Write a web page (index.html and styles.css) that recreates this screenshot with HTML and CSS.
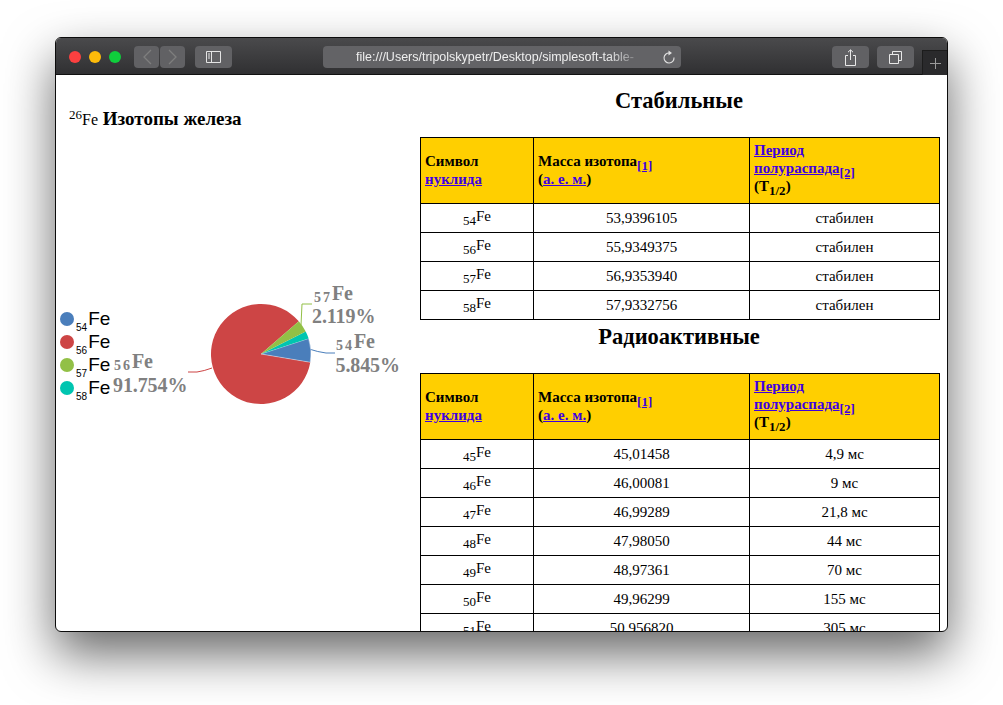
FILE: index.html
```html
<!DOCTYPE html>
<html lang="en">
<head>
    <meta charset="UTF-8">
    <meta name="viewport" content="width=device-width, initial-scale=1.0">
    <title>Изотопы железа</title>
    <link rel="stylesheet" href="styles.css">
</head>
<body>
    <div class="window">
        <div class="titlebar">
            <div class="lights">
                <span class="light red"></span>
                <span class="light yellow"></span>
                <span class="light green"></span>
            </div>
            <div class="nav">
                <div class="btn nav-btn">
                    <svg width="12" height="18" viewBox="0 0 12 18"><path d="M10 2 3 9l7 7" fill="none" stroke="#7e7e7e" stroke-width="1.3"/></svg>
                </div>
                <div class="btn nav-btn">
                    <svg width="12" height="18" viewBox="0 0 12 18"><path d="M2 2l7 7-7 7" fill="none" stroke="#7e7e7e" stroke-width="1.3"/></svg>
                </div>
            </div>
            <div class="btn sidebar-btn">
                <svg width="15" height="12" viewBox="0 0 15 12"><path d="M.5.5h14v11H.5zM5.500.5v11" fill="none" stroke="#e4e4e4"/><path d="M2 3h2M2 5h2M2 7h2" stroke="#e4e4e4"/></svg>
            </div>
            <div class="url">
                <span class="url-text">file:///Users/tripolskypetr/Desktop/simplesoft-table-</span>
                <svg class="reload" width="14" height="15" viewBox="0 0 14 15"><path d="M7.500 3A5 5 0 1 0 12 7.500" fill="none" stroke="#e0e0e0" stroke-width="1.1"/><path d="M6.500.5 10 3 6.500 5.500z" fill="#e0e0e0"/></svg>
            </div>
            <div class="btn tool-btn">
                <svg width="13" height="17" viewBox="0 0 13 17"><path d="M4 6.500H1.500v10h10v-10H9M6.500 11V1M4 3.200 6.500.8 9 3.200" fill="none" stroke="#e8e8e8"/></svg>
            </div>
            <div class="btn tool-btn">
                <svg width="13" height="13" viewBox="0 0 13 13"><path d="M.5 3.500h9v9h-9zM3.500 3.500v-3h9v9h-3" fill="none" stroke="#e8e8e8"/></svg>
            </div>
            <div class="new-tab">
                <svg width="11" height="11" viewBox="0 0 11 11"><path d="M5.500 0v11M0 5.500h11" stroke="#9a9a9a"/></svg>
            </div>
        </div>

        <div class="page">
            <div class="left">
                <h3 class="chart-title"><span class="title-nuclide"><sup>26</sup>Fe</span> Изотопы железа</h3>
                <div class="chart">
                    <ul class="legend">
                        <li><span class="dot c54"></span><sub>54</sub>Fe</li>
                        <li><span class="dot c56"></span><sub>56</sub>Fe</li>
                        <li><span class="dot c57"></span><sub>57</sub>Fe</li>
                        <li><span class="dot c58"></span><sub>58</sub>Fe</li>
                    </ul>
                    <!-- centre of pie at 205,105 -->
                    <svg class="pie" width="364" height="210" viewBox="0 0 364 210">
                        <path d="M253 100q9 3 17 4h9" fill="none" stroke="#4a7ebb"/>
                        <path d="M245 76l1-21h10" fill="none" stroke="#92c046"/>
                        <path d="M156 119q-8 3-15 4h-9" fill="none" stroke="#cd4545"/>
                        <g transform="translate(205 105)">
                            <path d="M0 0 49.300 8.300A50 50 0 1 1 37.800-32.700Z" fill="#cd4545"/>
                            <path d="M0 0 47.600-15.500A50 50 0 0 1 49.300 8.300Z" fill="#4a7ebb" stroke="#fff" stroke-width=".4"/>
                            <path d="M0 0 44.700-22.400A50 50 0 0 1 47.600-15.500Z" fill="#00c5b0"/>
                            <path d="M0 0 37.800-32.700A50 50 0 0 1 44.700-22.400Z" fill="#92c046"/>
                        </g>
                        <text class="label" x="280" y="99"><tspan class="label-sub" dy="2">54</tspan><tspan dy="-2">Fe</tspan></text>
                        <text class="label" x="279.500" y="123">5.845%</text>
                        <text class="label" x="258" y="51"><tspan class="label-sub" dy="2">57</tspan><tspan dy="-2">Fe</tspan></text>
                        <text class="label" x="256" y="74">2.119%</text>
                        <text class="label" x="58" y="119"><tspan class="label-sub" dy="2">56</tspan><tspan dy="-2">Fe</tspan></text>
                        <text class="label" x="57" y="143">91.754%</text>
                    </svg>
                </div>
            </div>

            <div class="right">
                <h2>Стабильные</h2>
                <table>
                    <tr>
                        <th class="col1">Символ<br><a href="#">нуклида</a></th>
                        <th class="col2">Масса изотопа<sub><a href="#">[1]</a></sub><br>(<a href="#">а. е. м.</a>)</th>
                        <th class="col3"><a href="#">Период<br>полураспада</a><sub><a href="#">[2]</a></sub><br>(T<sub>1/2</sub>)</th>
                    </tr>
                    <tr><td><sub>54</sub><sup>Fe</sup></td><td>53,9396105</td><td>стабилен</td></tr>
                    <tr><td><sub>56</sub><sup>Fe</sup></td><td>55,9349375</td><td>стабилен</td></tr>
                    <tr><td><sub>57</sub><sup>Fe</sup></td><td>56,9353940</td><td>стабилен</td></tr>
                    <tr><td><sub>58</sub><sup>Fe</sup></td><td>57,9332756</td><td>стабилен</td></tr>
                </table>
                <h2>Радиоактивные</h2>
                <table>
                    <tr>
                        <th class="col1">Символ<br><a href="#">нуклида</a></th>
                        <th class="col2">Масса изотопа<sub><a href="#">[1]</a></sub><br>(<a href="#">а. е. м.</a>)</th>
                        <th class="col3"><a href="#">Период<br>полураспада</a><sub><a href="#">[2]</a></sub><br>(T<sub>1/2</sub>)</th>
                    </tr>
                    <tr><td><sub>45</sub><sup>Fe</sup></td><td>45,01458</td><td>4,9 мс</td></tr>
                    <tr><td><sub>46</sub><sup>Fe</sup></td><td>46,00081</td><td>9 мс</td></tr>
                    <tr><td><sub>47</sub><sup>Fe</sup></td><td>46,99289</td><td>21,8 мс</td></tr>
                    <tr><td><sub>48</sub><sup>Fe</sup></td><td>47,98050</td><td>44 мс</td></tr>
                    <tr><td><sub>49</sub><sup>Fe</sup></td><td>48,97361</td><td>70 мс</td></tr>
                    <tr><td><sub>50</sub><sup>Fe</sup></td><td>49,96299</td><td>155 мс</td></tr>
                    <tr><td><sub>51</sub><sup>Fe</sup></td><td>50,956820</td><td>305 мс</td></tr>
                </table>
            </div>
        </div>
    </div>
</body>
</html>
```
FILE: styles.css
```css
html, body {
    margin: 0;
    height: 100%;
    overflow: hidden;
}
body {
    background-color: #fff;
    padding: 37px 0 0 55px;
    box-sizing: border-box;
    font-family: "Liberation Serif", serif;
    color: #000;
}
.window {
    width: 893px;
    height: 595px;
    box-sizing: border-box;
    border: 1px solid #0c0c0c;
    border-radius: 6px;
    background-color: #fff;
    overflow: hidden;
    box-shadow: 0 22px 50px rgba(0, 0, 0, 0.6);
}

/* toolbar */
.titlebar {
    height: 37px;
    display: flex;
    align-items: flex-start;
    box-sizing: border-box;
    padding: 8px 0 0 13px;
    background: linear-gradient(#4a4a4c, #303032);
    border-bottom: 1px solid #111;
}
.lights {
    display: flex;
    gap: 8px;
    margin: 5px 13px 0 0;
}
.light {
    width: 12px;
    height: 12px;
    border-radius: 50%;
}
.red { background-color: #fc4040; }
.yellow { background-color: #fdbb0a; }
.green { background-color: #0fce3c; }
.btn {
    height: 22px;
    border-radius: 4px;
    background-color: #616164;
    display: flex;
    align-items: center;
    justify-content: center;
}
.nav {
    display: flex;
    gap: 1px;
    margin-right: 10px;
}
.nav-btn { width: 25px; }
.sidebar-btn {
    width: 37px;
    margin-right: 91px;
}
.url {
    width: 358px;
    height: 22px;
    margin-right: 151px;
    border-radius: 4px;
    background-color: #636366;
    display: flex;
    align-items: center;
    justify-content: space-between;
    padding: 0 5px 0 33px;
    box-sizing: border-box;
}
.url-text {
    width: 295px;
    overflow: hidden;
    white-space: nowrap;
    font-family: "Liberation Sans", sans-serif;
    font-size: 12.5px;
    color: #eee;
    -webkit-mask-image: linear-gradient(to right, #000 85%, transparent 98%);
    mask-image: linear-gradient(to right, #000 85%, transparent 98%);
}
.tool-btn {
    width: 37px;
    margin-right: 8px;
}
.new-tab {
    width: 25px;
    height: 25px;
    margin-top: 4px;
    box-sizing: border-box;
    border: 1px solid #1c1c1c;
    border-width: 1px 0 0 1px;
    background-color: #2a2a2c;
    display: flex;
    align-items: center;
    justify-content: center;
}

/* page */
.page {
    display: flex;
    height: 556px;
    overflow: hidden;
}
.left {
    width: 364px;
    flex-shrink: 0;
}
.chart-title {
    margin: 31px 0 0 13px;
    font-size: 19px;
    line-height: 26px;
    font-weight: bold;
}
.title-nuclide {
    font-weight: normal;
    font-size: 16px;
}
.title-nuclide sup {
    font-size: 13px;
    line-height: 0;
}
.chart {
    position: relative;
    margin-top: 116px;
    height: 210px;
}
.pie {
    display: block;
}
.legend {
    position: absolute;
    left: 4px;
    top: 58px;
    margin: 0;
    padding: 0;
    list-style: none;
    font-family: "Liberation Sans", sans-serif;
    font-size: 19px;
    line-height: 23px;
}
.legend li {
    display: flex;
    align-items: center;
    height: 23px;
}
.legend sub {
    font-size: 10px;
    line-height: 0;
    align-self: flex-end;
    margin: 0 1px;
    position: relative;
    top: -2px;
}
.dot {
    width: 14px;
    height: 14px;
    border-radius: 50%;
    margin-right: 1px;
}
.c54 { background-color: #4a7ebb; }
.c56 { background-color: #cd4545; }
.c57 { background-color: #92c046; }
.c58 { background-color: #00c5b0; }
.label {
    font-family: "Liberation Serif", serif;
    font-weight: bold;
    font-size: 20px;
    letter-spacing: -0.1px;
    fill: #808080;
}
.label-sub {
    font-size: 14px;
    letter-spacing: 2px;
}
.right {
    width: 520px;
    flex-shrink: 0;
}
h2 {
    margin: 0;
    padding-right: 2px;
    font-size: 22.5px;
    line-height: 24px;
    text-align: center;
}
.right h2:first-child {
    padding-top: 14px;
    padding-bottom: 24px;
}
.right table + h2 {
    padding-top: 5px;
    padding-bottom: 24px;
}
table {
    width: 520px;
    table-layout: fixed;
    border-collapse: collapse;
    font-size: 15px;
}
th, td {
    border: 1px solid #000;
    padding: 0 4px;
}
td {
    height: 28px;
    text-align: center;
    line-height: 17px;
}
th {
    height: 60px;
    padding-bottom: 2px;
    background-color: #ffcf00;
    text-align: left;
    font-size: 15px;
    line-height: 18px;
}
th.col3 {
    padding-bottom: 5px;
}
.col1 { width: 104px; }
.col2 { width: 207px; }
td sub, td sup, th sub {
    line-height: 0;
}
td sub {
    font-size: 13px;
    vertical-align: -2px;
}
td sup {
    font-size: 15px;
    vertical-align: 2px;
}
th sub { font-size: 13px; }
a {
    color: #3e00e0;
}
```
